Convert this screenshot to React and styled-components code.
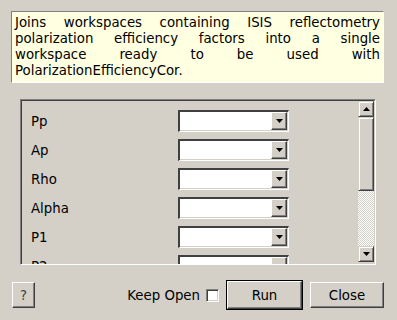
import { Fragment } from 'react'
import styled, { createGlobalStyle } from 'styled-components'

const GlobalStyle = createGlobalStyle`
  html, body {
    margin: 0;
    padding: 0;
    background: #d4d0c8;
  }
  body {
    font-family: "DejaVu Sans", "Liberation Sans", sans-serif;
    font-size: 13.33px;
    color: #000;
  }
`

const StyledDialog = styled.div`
  width: 397px;
  height: 320px;
  box-sizing: border-box;
  padding: 11px 13px 0 11px;
  display: flex;
  flex-direction: column;
  overflow: hidden;
`
const StyledDescription = styled.div`
  height: 72px;
  box-sizing: border-box;
  background: #ffffe1;
  border-top: 1px solid #808080;
  border-left: 1px solid #808080;
  border-right: 1px solid #ffffff;
  border-bottom: 1px solid #ffffff;
  padding: 3px 3px 0 3px;
  line-height: 16px;
`
const StyledLine = styled.div`
  text-align: ${(props) => (props.last ? 'left' : 'justify')};
  text-align-last: ${(props) => (props.last ? 'left' : 'justify')};
  white-space: nowrap;
`
const StyledFrame = styled.div`
  margin: 16px 8px 0 9px;
  height: 166px;
  box-sizing: border-box;
  border-top: 1px solid #808080;
  border-left: 1px solid #808080;
  border-right: 1px solid #ffffff;
  border-bottom: 1px solid #ffffff;
  display: flex;
`
const StyledInner = styled.div`
  flex: 1;
  display: flex;
  border-top: 1px solid #404040;
  border-left: 1px solid #404040;
  border-right: 1px solid #d4d0c8;
  overflow: hidden;
`
const StyledViewport = styled.div`
  flex: 1;
  overflow: hidden;
  padding: 9px 0 0 9px;
  display: grid;
  grid-template-columns: 147px 111px;
  grid-auto-rows: 22px;
  row-gap: 7px;
  align-content: start;
`
const StyledLabel = styled.div`
  display: flex;
  align-items: center;
  padding-top: 1px;
`
const StyledCombo = styled.div`
  box-sizing: border-box;
  height: 22px;
  background: #ffffff;
  border-top: 2px solid #404040;
  border-left: 2px solid #404040;
  border-right: 1px solid #ffffff;
  border-bottom: 1px solid #ffffff;
  box-shadow: inset -1px -1px 0 #d4d0c8;
  display: flex;
  justify-content: flex-end;
  padding: 0 1px 1px 0;
`
const StyledArrowButton = styled.div`
  width: 16px;
  box-sizing: border-box;
  background: #d4d0c8;
  border-top: 1px solid #ffffff;
  border-left: 1px solid #ffffff;
  border-right: 1px solid #404040;
  border-bottom: 1px solid #404040;
  box-shadow: inset -1px -1px 0 #808080;
  display: flex;
  align-items: center;
  justify-content: center;
`
const StyledScrollbar = styled.div`
  width: 16px;
  margin-bottom: 2px;
  display: flex;
  flex-direction: column;
  background-color: #ffffff;
  background-image: repeating-conic-gradient(#d4d0c8 0 25%, #ffffff 0 50%);
  background-size: 2px 2px;
`
const StyledScrollButton = styled.div`
  height: 16px;
  flex: none;
  box-sizing: border-box;
  background: #d4d0c8;
  border-top: 1px solid #d4d0c8;
  border-left: 1px solid #d4d0c8;
  border-right: 1px solid #404040;
  border-bottom: 1px solid #404040;
  box-shadow: inset 1px 1px 0 #ffffff, inset -1px -1px 0 #808080;
  display: flex;
  align-items: center;
  justify-content: center;
`
const StyledSlider = styled(StyledScrollButton)`
  height: ${(props) => props.size}px;
`
const StyledTrough = styled.div`
  flex: 1;
`
const StyledFooter = styled.div`
  margin-top: 16px;
  display: flex;
  align-items: center;
  gap: 7px;
`
const StyledButton = styled.button`
  font: inherit;
  color: #000;
  height: ${(props) => (props.isDefault ? 28 : 26)}px;
  width: ${(props) => props.size}px;
  margin: 0;
  padding: 0;
  background: #d4d0c8;
  box-sizing: border-box;
  border-top: 1px solid #ffffff;
  border-left: 1px solid #ffffff;
  border-right: 1px solid #404040;
  border-bottom: 1px solid #404040;
  box-shadow: inset -1px -1px 0 #808080;
  outline: ${(props) => (props.isDefault ? '1px solid #000' : 'none')};
  ${(props) => props.isDefault && 'margin: 0 1px;'}
`
const StyledHelp = styled(StyledButton)`
  margin-left: 1px;
  margin-right: auto;
  color: #404040;
`
const StyledCheckLabel = styled.label`
  display: flex;
  align-items: center;
  gap: 6px;
`
const StyledCheckbox = styled.span`
  width: 13px;
  height: 13px;
  box-sizing: border-box;
  background: #ffffff;
  border-top: 1px solid #808080;
  border-left: 1px solid #808080;
  border-right: 1px solid #ffffff;
  border-bottom: 1px solid #ffffff;
  box-shadow: inset 1px 1px 0 #404040, inset -1px -1px 0 #d4d0c8;
`

const DownArrow = () => (
  <svg width="7" height="4" viewBox="0 0 7 4">
    <polygon points="0,0 7,0 3.5,4" fill="#000" />
  </svg>
)
const UpArrow = () => (
  <svg width="7" height="4" viewBox="0 0 7 4">
    <polygon points="0,4 7,4 3.5,0" fill="#000" />
  </svg>
)

const descriptionLines = [
  'Joins workspaces containing ISIS reflectometry',
  'polarization efficiency factors into a single',
  'workspace ready to be used with',
  'PolarizationEfficiencyCor.'
]
const properties = ['Pp', 'Ap', 'Rho', 'Alpha', 'P1', 'P2', 'F1', 'F2']

function App() {
  return (
    <>
      <GlobalStyle />
      <StyledDialog>
        <StyledDescription>
          {descriptionLines.map((line, i) => (
            <StyledLine key={line} last={i === descriptionLines.length - 1}>
              {line}
            </StyledLine>
          ))}
        </StyledDescription>
        <StyledFrame>
          <StyledInner>
            <StyledViewport>
              {properties.map((name) => (
                <Fragment key={name}>
                  <StyledLabel>{name}</StyledLabel>
                  <StyledCombo>
                    <StyledArrowButton>
                      <DownArrow />
                    </StyledArrowButton>
                  </StyledCombo>
                </Fragment>
              ))}
            </StyledViewport>
            <StyledScrollbar>
              <StyledScrollButton>
                <UpArrow />
              </StyledScrollButton>
              <StyledSlider size={74} />
              <StyledTrough />
              <StyledScrollButton>
                <DownArrow />
              </StyledScrollButton>
            </StyledScrollbar>
          </StyledInner>
        </StyledFrame>
        <StyledFooter>
          <StyledHelp size={23}>?</StyledHelp>
          <StyledCheckLabel>
            Keep Open
            <StyledCheckbox />
          </StyledCheckLabel>
          <StyledButton size={75} isDefault>
            Run
          </StyledButton>
          <StyledButton size={74}>Close</StyledButton>
        </StyledFooter>
      </StyledDialog>
    </>
  )
}

export default App
